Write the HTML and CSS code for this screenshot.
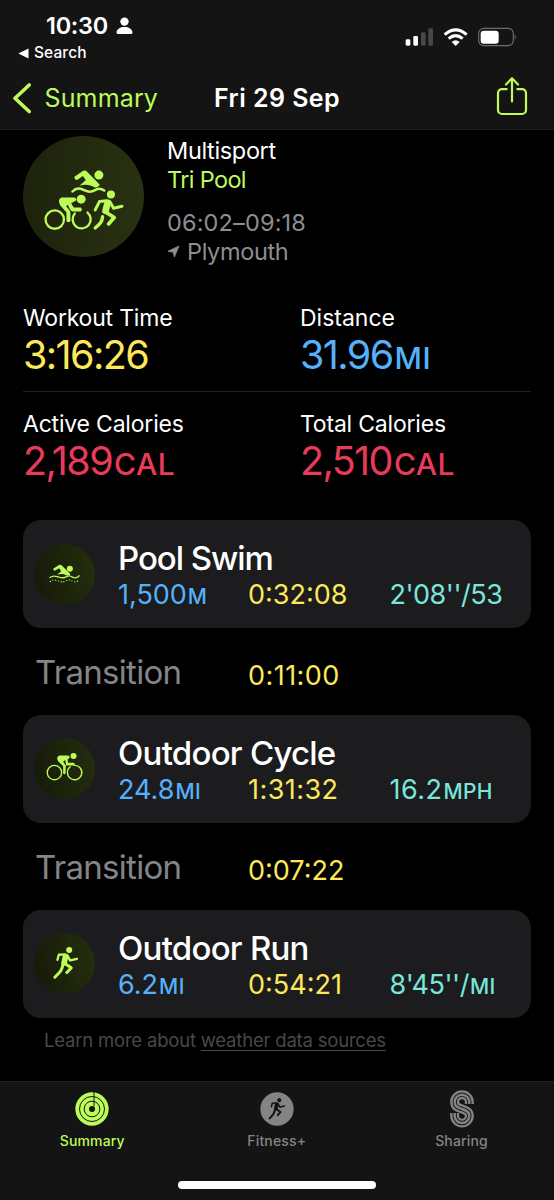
FILE: index.html
```
<!DOCTYPE html>
<html lang="en">
<head>
<meta charset="utf-8">
<title>Fri 29 Sep</title>
<link rel="stylesheet" href="styles.css">
</head>
<body>
<svg class="defs" width="0" height="0" aria-hidden="true">
  <defs>
    <linearGradient id="disc" x1="0" y1="0" x2="1" y2="0"><stop offset="0" stop-color="#1d230c"/><stop offset="1" stop-color="#293112"/></linearGradient>
    <linearGradient id="disc-small" x1="0" y1="0.6" x2="1" y2="0.4"><stop offset="0" stop-color="#161b09"/><stop offset="1" stop-color="#242d0e"/></linearGradient>
    <symbol id="runner" viewBox="95 136 86 104">
      <g fill="none" stroke="currentColor" stroke-linecap="round" stroke-linejoin="round">
        <path stroke-width="7" d="M113 179 L117 164 L135 163"/>
        <path stroke-width="17" d="M137 169 L133 188"/>
        <path stroke-width="7" d="M142 165 L151 181 L171 176"/>
        <path stroke-width="9" d="M135 190 L154 203 L141 217"/>
        <path stroke-width="9" d="M130 189 C127 212 120 216 105 231"/>
      </g>
      <circle cx="148" cy="150" r="9" fill="currentColor"/>
    </symbol>
  </defs>
</svg>
<div class="phone">
  <header class="top">
    <div class="status">
      <div class="status-left">
        <div class="clock"><span>10:30</span>
          <svg width="17" height="18" viewBox="0 0 17 18" fill="#fff"><circle cx="8.5" cy="4.6" r="4.2"/><path d="M.5 15.6C.8 12 4.2 10 8.5 10s7.700 2 8 5.600c0 .9-.5 1.400-1.400 1.400H1.900c-.9 0-1.400-.5-1.400-1.400z"/></svg>
        </div>
        <div class="back-app"><svg width="11" height="11" viewBox="0 0 11 11" fill="#fff"><path d="M.3 5.500 L10.500 .5 V10.500z"/></svg><span>Search</span></div>
      </div>
      <svg class="signals" width="113" height="20" viewBox="380 80 339 60">
        <rect x="385" y="117" width="14" height="19" rx="4" fill="#fff"/>
        <rect x="408" y="107" width="14" height="29" rx="4" fill="#fff"/>
        <rect x="431" y="96" width="14" height="40" rx="4" fill="#474747"/>
        <rect x="453" y="84" width="14" height="52" rx="4" fill="#474747"/>
        <g fill="none" stroke="#fff" stroke-width="9"><path d="M502 103 Q535 74 568 103"/><path d="M514 115 Q535 97 556 115"/></g>
        <path fill="#fff" d="M523 125 Q535 115 547 125 L535 137z"/>
        <rect x="604" y="84" width="104" height="52" rx="15" fill="none" stroke="#6c6c6c" stroke-width="3.500"/>
        <rect x="610" y="91" width="54" height="39" rx="9" fill="#fff"/>
        <path d="M712 102 Q719 110 712 118z" fill="#6c6c6c"/>
      </svg>
    </div>
    <nav class="nav">
      <div class="back"><svg width="20" height="32" viewBox="0 0 20 32" fill="none" stroke="#bcfb59" stroke-width="3.600" stroke-linecap="round" stroke-linejoin="round"><path d="M17.200 3 L3 16.200 L17.200 29.500"/></svg><span class="nav-label">Summary</span></div>
      <h1 class="nav-title">Fri 29 Sep</h1>
      <svg class="share" width="32" height="40" viewBox="0 0 32 40" fill="none" stroke="#bcfb59" stroke-width="2.200" stroke-linecap="round" stroke-linejoin="round"><path stroke-linecap="butt" d="M11.500 13.200H6a4 4 0 0 0-4 4V34a4 4 0 0 0 4 4h20a4 4 0 0 0 4-4V17.200a4 4 0 0 0-4-4h-5.500"/><path d="M16 25.500V2.500M10 8.500L16 2.300L22 8.500"/></svg>
    </nav>
  </header>

  <main class="content">
    <section class="intro">
      <svg class="sport-disc" width="121" height="121" viewBox="38 17 362 362">
        <circle cx="219" cy="198" r="181" fill="url(#disc)"/>
        <g fill="#bcfb59">
          <circle cx="265" cy="134" r="13.500"/>
          <path d="M192 139 L218 121 Q224 118 229 123 L268 163 Q262 172 254 171 Q247 168 240 165 Q224 160 207 166 L226 149 L217 137 L200 149 Q191 148 192 139z"/>
          <circle cx="212" cy="206" r="13.500"/>
          <circle cx="301" cy="192" r="12"/>
          <path d="M154 201 H191 Q198 202 197 210 L182 218 L190 231 H211 Q217 237 211 243 H187 Q182 243 179 238 L172 223 L167 227 L177 239 Q180 243 180 248 V271 Q174 279 168 271 V246 L149 224 Q140 206 154 201z"/>
        </g>
        <g fill="none" stroke="#bcfb59" stroke-width="7.500" stroke-linecap="round" stroke-linejoin="round">
          <path d="M186 183 C200 168 213 175 223 180 S245 184 255 178 S273 174 281 180"/>
          <circle cx="133" cy="267" r="27.500" stroke-width="7"/>
          <path stroke-width="7" d="M193 249 A27 27 0 1 0 231 246"/>
          <path stroke-width="9" d="M254 238 L267 213 L288 211"/>
          <path stroke-width="20" d="M291 217 L285 241"/>
          <path stroke-width="9" d="M298 214 L309 233 L334 227"/>
          <path stroke-width="11" d="M286 245 L311 261 L294 280"/>
          <path stroke-width="10" d="M276 258 C275 275 267 281 254 292"/>
        </g>
      </svg>
      <div class="intro-text">
        <div class="line kind">Multisport</div>
        <div class="line name">Tri Pool</div>
        <div class="line hours">06:02–09:18</div>
        <div class="line place"><svg width="13" height="13" viewBox="0 0 13 13" fill="#8d8d92" stroke="#8d8d92" stroke-width=".8" stroke-linejoin="round"><path d="M12 1 L7.400 12 L6.200 7.200 L1 6.200z"/></svg><span>Plymouth</span></div>
      </div>
    </section>

    <section class="metrics">
      <div class="metric"><div class="metric-label">Workout Time</div><div class="metric-value yellow">3:16:26</div></div>
      <div class="metric"><div class="metric-label loose">Distance</div><div class="metric-value blue">31.96<small>MI</small></div></div>
      <div class="metric"><div class="metric-label">Active Calories</div><div class="metric-value red">2,189<small>CAL</small></div></div>
      <div class="metric"><div class="metric-label">Total Calories</div><div class="metric-value red">2,510<small>CAL</small></div></div>
    </section>

    <section class="legs">
      <article class="leg">
        <svg class="leg-icon" width="61" height="61" viewBox="43 87 182 182">
          <circle cx="134" cy="178" r="91" fill="url(#disc-small)"/>
          <g fill="#bcfb59"><circle cx="150" cy="161" r="9"/><path d="M101 160 L119 149 Q123 148 126 151 L152 177 Q146 183 138 180 Q128 174 112 179 L124 168 L118 159 L105 167 Q99 166 101 160z"/></g>
          <g fill="none" stroke="#bcfb59" stroke-linecap="round"><path stroke-width="4" d="M91 187 C102 178 109 184 117 186 S130 190 139 185 S151 182 158 186 S172 188 178 182"/><path stroke-width="4" stroke-dasharray="0 8.500" d="M92 199 C102 190 109 196 117 198 S130 202 139 197 S151 194 158 198 S172 200 178 194"/></g>
        </svg>
        <div class="leg-body"><h2 class="leg-title narrow">Pool Swim</h2><div class="stats"><span class="blue">1,500<small>M</small></span><span class="yellow">0:32:08</span><span class="teal tight">2'08''/53</span></div></div>
      </article>
      <div class="transition"><span class="transition-name">Transition</span><span class="transition-time yellow wide">0:11:00</span></div>
      <article class="leg">
        <svg class="leg-icon" width="61" height="61" viewBox="43 87 182 182">
          <circle cx="134" cy="178" r="91" fill="url(#disc-small)"/>
          <g fill="none" stroke="#bcfb59" stroke-width="4" stroke-linecap="round"><circle cx="104" cy="190" r="21.500"/><path d="M151 173 A21.500 21.500 0 1 0 163 168.500"/></g>
          <g fill="#bcfb59"><circle cx="161" cy="141" r="9"/><path d="M118 139 H145 Q151 141 149 147 L143 151 L145 161 H162 Q167 165 162 169 H139 L136 153 L130 158 L138 169 L137 193 Q134 197 130 193 L130 171 L115 156 Q108 144 118 139z"/></g>
        </svg>
        <div class="leg-body"><h2 class="leg-title">Outdoor Cycle</h2><div class="stats"><span class="blue">24.8<small>MI</small></span><span class="yellow wide">1:31:32</span><span class="teal wide">16.2<small>MPH</small></span></div></div>
      </article>
      <div class="transition"><span class="transition-name">Transition</span><span class="transition-time yellow">0:07:22</span></div>
      <article class="leg">
        <svg class="leg-icon" width="61" height="61" viewBox="43 99 182 182">
          <circle cx="134" cy="190" r="91" fill="url(#disc-small)"/>
          <use href="#runner" x="95" y="136" width="86" height="104" color="#bcfb59"/>
        </svg>
        <div class="leg-body"><h2 class="leg-title">Outdoor Run</h2><div class="stats"><span class="blue">6.2<small>MI</small></span><span class="yellow">0:54:21</span><span class="teal tight">8'45''/<small>MI</small></span></div></div>
      </article>
    </section>
    <p class="sources">Learn more about <a class="sources-link">weather data sources</a></p>
  </main>

  <footer class="tabs">
    <div class="tab active">
      <svg width="34" height="38" viewBox="-51 -57 102 114"><circle r="50" fill="#bcfb59"/><g fill="none" stroke="#141414" stroke-width="3"><circle r="37.500"/><circle r="23.500"/><path d="M6 -51 V-8"/></g><circle r="9" fill="#141414"/></svg>
      <span>Summary</span>
    </div>
    <div class="tab">
      <svg width="34" height="38" viewBox="88 59 102 114"><circle cx="139" cy="116" r="50" fill="#848484"/><use href="#runner" x="110" y="80" width="58" height="70" color="#141414"/></svg>
      <span>Fitness+</span>
    </div>
    <div class="tab">
      <svg width="34" height="38" viewBox="643 59 102 114" fill="none">
        <path stroke="#848484" stroke-width="27" d="M716 101 V95 A22 22 0 0 0 672 95 C672 110 683 112 694 116 C706 120 716 124 716 136 A22 22 0 0 1 672 136 V128"/>
        <path stroke="#141414" stroke-width="13" d="M716 102 V95 A22 22 0 0 0 672 95 C672 110 683 112 694 116 C706 120 716 124 716 136 A22 22 0 0 1 672 136 V127"/>
        <path stroke="#848484" stroke-width="7.500" d="M716 101 V95 A22 22 0 0 0 672 95 C672 110 683 112 694 116 C706 120 716 124 716 136 A22 22 0 0 1 672 136 V128"/>
      </svg>
      <span>Sharing</span>
    </div>
    <div class="home"></div>
  </footer>
</div>
</body>
</html>
```
FILE: styles.css
```
* { box-sizing: border-box; }
body { margin: 0; background: #000; color: #fff; font-family: Inter, "Liberation Sans", sans-serif; }
h1, h2, p { margin: 0; }
svg { display: block; flex: none; }
.defs { position: absolute; }
.phone { width: 554px; height: 1200px; display: flex; flex-direction: column; overflow: hidden; }

.top { height: 130px; background: #141414; border-bottom: 1px solid #202020; flex: none; }
.status { height: 70px; display: flex; justify-content: space-between; padding: 14px 37px 0 18px; }
.clock { display: flex; align-items: center; gap: 8px; height: 24px; padding-left: 28px; font-size: 23.500px; font-weight: 600; line-height: 24px; letter-spacing: -0.300px; }
.back-app { display: flex; align-items: center; gap: 5px; height: 20px; margin-top: 5px; font-size: 15.500px; font-weight: 500; line-height: 20px; letter-spacing: 0.100px; }
.signals { margin-top: 13px; }
.nav { height: 56px; display: grid; grid-template-columns: 202px 1fr 32px; align-items: center; padding: 0 26px 0 12px; }
.back { display: flex; align-items: center; gap: 12.500px; }
.nav-label { color: #bcfb59; font-size: 25px; line-height: 30px; letter-spacing: 0.150px; }
.nav-title { font-size: 25px; font-weight: 600; line-height: 30px; letter-spacing: 0.450px; }
.share { margin-top: -4px; }

.content { height: 951px; flex: none; padding: 6px 23px 0; }
.intro { display: flex; gap: 23px; }
.sport-disc { margin-top: -0.500px; }
.intro-text { font-size: 23.500px; letter-spacing: -0.350px; }
.line { line-height: 29px; height: 29px; white-space: nowrap; }
.name { color: #bcfb59; letter-spacing: -0.650px; }
.hours { margin-top: 14px; color: #8d8d92; letter-spacing: 0.150px; }
.place { display: flex; align-items: center; gap: 7px; color: #8d8d92; }

.metrics { display: grid; grid-template-columns: 277px 1fr; margin-top: 37px; }
.metric { height: 105.500px; white-space: nowrap; }
.metric:nth-child(-n+2) { height: 89px; border-bottom: 1px solid #1f1f21; margin-bottom: 17px; }
.metric-label { font-size: 23px; line-height: 30px; letter-spacing: -0.200px; }
.loose { letter-spacing: 0; }
.metric-value { font-size: 39.500px; line-height: 44px; letter-spacing: -1.600px; }
.metric-value small { font-size: 30px; font-weight: 500; letter-spacing: 0.500px; margin-left: 2px; }
.yellow { color: #fde85a; }
.blue { color: #55b1fa; }
.red { color: #e83b5c; }
.teal { color: #79e6dc; }

.legs { display: flex; flex-direction: column; margin-top: 5.500px; }
.leg { height: 108px; border-radius: 18px; background: #1c1c1e; display: flex; align-items: center; gap: 23px; padding: 0 11px; }
.leg-body { flex: 1; padding-top: 4px; }
.leg-title { font-size: 33px; font-weight: 500; line-height: 40px; white-space: nowrap; letter-spacing: -0.750px; }
.narrow { letter-spacing: -1.050px; }
.stats { display: grid; grid-template-columns: 130px 141.500px 1fr; font-size: 27px; line-height: 34px; white-space: nowrap; }
.stats small { font-size: 21px; font-weight: 500; letter-spacing: 0.400px; margin-left: 1px; }
.tight { letter-spacing: -0.500px; }
.wide { letter-spacing: 0.450px; }
.transition { height: 86.800px; display: grid; grid-template-columns: 213px 1fr; align-items: center; padding: 2px 0 0 12px; }
.transition-name { font-size: 33px; color: #848489; letter-spacing: -0.700px; }
.transition-time { font-size: 27px; padding-top: 6px; }
.sources { padding: 11px 0 0 21px; font-size: 18.500px; line-height: 22px; color: #48484a; letter-spacing: -0.200px; }
.sources-link { text-decoration: underline; text-underline-offset: 3px; }

.tabs { height: 119px; flex: none; background: #141414; border-top: 1px solid #202020; display: grid; grid-template-columns: 184.500px 184.500px 185px; grid-template-rows: 99px 8px; padding-top: 8px; }
.tab { display: flex; flex-direction: column; align-items: center; color: #848484; font-size: 14px; font-weight: 500; line-height: 18px; gap: 4px; letter-spacing: 0.150px; }
.active { color: #bcfb59; }
.home { grid-column: 1 / -1; width: 198px; height: 8px; margin: -8px auto 0; border-radius: 4px; background: #fff; }
```
